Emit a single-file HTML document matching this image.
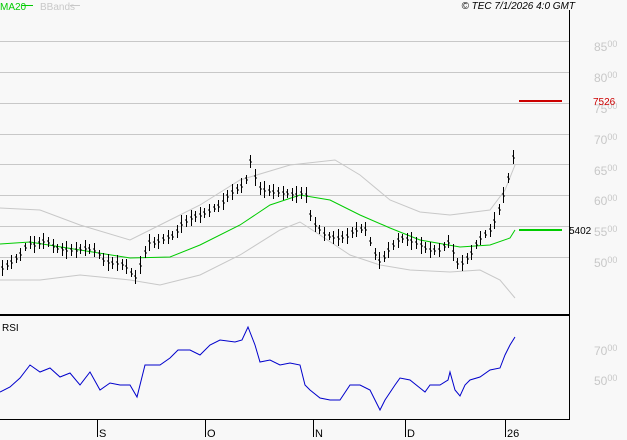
<!DOCTYPE html>
<html><head><meta charset="utf-8"><style>
html,body{margin:0;padding:0;background:#f8f8f8;}
svg{display:block;font-family:"Liberation Sans",sans-serif;}
</style></head><body>
<svg id="s" width="627" height="440" viewBox="0 0 627 440" xmlns="http://www.w3.org/2000/svg">
<rect width="627" height="440" fill="#f8f8f8"/>
<g stroke="#c8c8c8" stroke-width="1">
<line x1="0" y1="41.5" x2="569" y2="41.5"/><line x1="0" y1="72.5" x2="569" y2="72.5"/>
<line x1="0" y1="103.5" x2="569" y2="103.5"/><line x1="0" y1="134.5" x2="569" y2="134.5"/>
<line x1="0" y1="164.5" x2="569" y2="164.5"/><line x1="0" y1="195.5" x2="569" y2="195.5"/>
<line x1="0" y1="226.5" x2="569" y2="226.5"/><line x1="0" y1="257.5" x2="569" y2="257.5"/>
</g>
<g fill="#c8c8c8" font-size="12">
<text x="594" y="51">85<tspan font-size="9" dy="-4">00</tspan></text>
<text x="594" y="82">80<tspan font-size="9" dy="-4">00</tspan></text>
<text x="594" y="113">75<tspan font-size="9" dy="-4">00</tspan></text>
<text x="594" y="144">70<tspan font-size="9" dy="-4">00</tspan></text>
<text x="594" y="175">65<tspan font-size="9" dy="-4">00</tspan></text>
<text x="594" y="205">60<tspan font-size="9" dy="-4">00</tspan></text>
<text x="594" y="236">55<tspan font-size="9" dy="-4">00</tspan></text>
<text x="594" y="267">50<tspan font-size="9" dy="-4">00</tspan></text>
<text x="594" y="355">70<tspan font-size="9" dy="-4">00</tspan></text>
<text x="594" y="385">50<tspan font-size="9" dy="-4">00</tspan></text>
</g>
<text x="0" y="10" font-size="10" fill="#00cc00">MA20</text><line x1="22" y1="5.5" x2="33" y2="5.5" stroke="#00cc00"/>
<text x="40" y="10" font-size="10" fill="#c8c8c8">BBands</text><line x1="70" y1="5.5" x2="80" y2="5.5" stroke="#c8c8c8"/>
<text x="575" y="9" font-size="10" font-style="italic" text-anchor="end" fill="#000">© TEC 7/1/2026 4:0 GMT</text>
<line x1="569.5" y1="10" x2="569.5" y2="420" stroke="#000"/>
<line x1="0" y1="315" x2="569" y2="315" stroke="#000" stroke-width="2"/>
<line x1="0" y1="419.5" x2="570" y2="419.5" stroke="#000"/>
<g stroke="#000"><line x1="97.5" y1="420" x2="97.5" y2="437"/><line x1="205.5" y1="420" x2="205.5" y2="437"/><line x1="313.5" y1="420" x2="313.5" y2="437"/><line x1="405.5" y1="420" x2="405.5" y2="437"/><line x1="505.5" y1="420" x2="505.5" y2="437"/></g>
<g font-size="11" fill="#000"><text x="99" y="437">S</text><text x="207" y="437">O</text><text x="315" y="437">N</text><text x="407" y="437">D</text><text x="507" y="437">26</text></g>
<text x="2" y="331" font-size="10" fill="#000">RSI</text>
<line x1="519" y1="101" x2="562" y2="101" stroke="#cc0000" stroke-width="2"/>
<text x="593" y="105" font-size="10" fill="#cc0000">7526</text>
<line x1="519" y1="230" x2="562" y2="230" stroke="#00cc00" stroke-width="2"/>
<text x="569" y="234" font-size="10" fill="#000">5402</text>
<polyline fill="none" stroke="#c8c8c8" points="0,208 40,210 80,225 130,240 160,225 200,205 240,180 290,165 335,160 360,175 390,200 420,212 450,215 490,210 505,190 515,165"/>
<polyline fill="none" stroke="#c8c8c8" points="0,280 40,280 80,275 130,280 160,285 200,275 240,255 280,230 300,222 320,235 350,255 380,265 410,270 450,272 480,270 500,280 515,298"/>
<polyline fill="none" stroke="#00cc00" points="0,244 30,242 80,250 130,258 170,257 200,245 240,225 270,205 300,195 330,200 360,215 390,228 420,240 460,247 490,245 510,238 515,230"/>
<path id="bars" fill="none" stroke="#000" stroke-width="1"/>
<polyline fill="none" stroke="#0000cc" points="0,392 10,387 20,378 30,365 40,372 50,368 60,377 70,373 80,385 90,372 100,390 110,383 120,385 130,385 137,397 145,365 160,365 170,358 178,350 190,350 200,355 210,345 220,340 235,342 242,340 248,327 255,345 260,362 270,360 280,365 290,363 300,365 305,385 310,390 320,398 330,400 340,400 350,385 360,385 370,390 380,410 385,400 395,385 400,378 410,380 420,388 425,392 430,385 440,385 448,380 450,372 455,390 460,396 465,385 470,380 480,377 490,370 500,368 505,355 510,345 515,337"/>
</svg>
<script>
var k=[[2,268],[10,263],[20,255],[28,242],[35,245],[45,240],[55,248],[65,250],[75,250],[85,248],[95,250],[105,262],[115,263],[125,265],[135,278],[140,265],[148,242],[155,243],[165,238],[175,235],[180,225],[190,218],[200,215],[210,210],[220,205],[228,195],[235,190],[245,183],[250,160],[258,188],[265,190],[275,192],[285,193],[295,195],[305,192],[310,215],[315,225],[325,235],[335,238],[345,237],[355,230],[365,228],[375,255],[380,262],[390,248],[400,238],[410,240],[420,245],[430,250],[440,250],[450,240],[455,262],[460,265],[470,255],[478,240],[490,230],[498,212],[505,190],[510,170],[514,150]];
function f(x){for(var i=0;i<k.length-1;i++){if(x<=k[i+1][0]){var t=(x-k[i][0])/(k[i+1][0]-k[i][0]);return k[i][1]+t*(k[i+1][1]-k[i][1]);}}return k[k.length-1][1];}
var d="";for(var x=2;x<=515;x+=4.6){var xx=Math.round(x)+0.5,y=f(x),h=4+((x*7)%5);d+="M"+xx+" "+(y-h).toFixed(0)+"V"+(y+h).toFixed(0)+"M"+(xx-1.5)+" "+(y-1).toFixed(0)+"h1.5M"+xx+" "+(y+1).toFixed(0)+"h1.5";}
document.getElementById("bars").setAttribute("d",d);
</script>
</body></html>
